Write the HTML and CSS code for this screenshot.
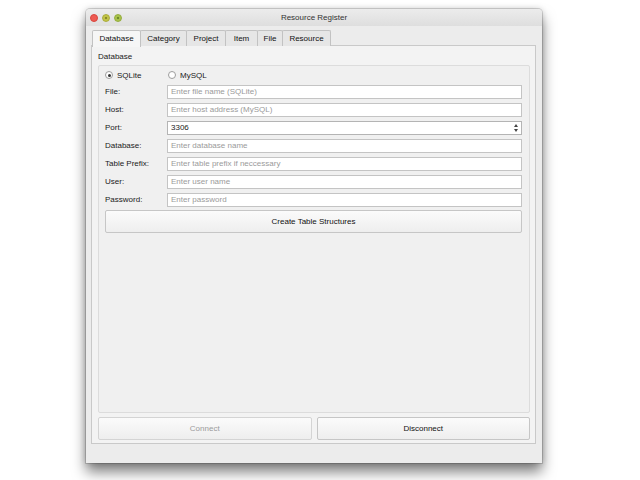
FILE: index.html
```html
<!DOCTYPE html>
<html>
<head>
<meta charset="utf-8">
<title>Resource Register</title>
<link rel="stylesheet" href="styles.css">
</head>
<body>
<div class="window">
  <div class="titlebar">
    <div class="lights">
      <span class="light red"></span>
      <span class="light yellow"></span>
      <span class="light green"></span>
    </div>
    <div class="title">Resource Register</div>
    <div></div>
  </div>
  <div class="content">
    <div class="tabs">
      <div class="tab active t-db">Database</div>
      <div class="tab t-cat">Category</div>
      <div class="tab t-proj">Project</div>
      <div class="tab t-item">Item</div>
      <div class="tab t-file">File</div>
      <div class="tab t-res">Resource</div>
    </div>
    <div class="pane">
      <div class="group-title">Database</div>
      <div class="group">
        <div class="radios">
          <label class="radio first"><span class="dot checked"></span>SQLite</label>
          <label class="radio"><span class="dot"></span>MySQL</label>
        </div>
        <div class="form">
          <div class="lbl">File:</div><div class="input ph">Enter file name (SQLite)</div>
          <div class="lbl">Host:</div><div class="input ph">Enter host address (MySQL)</div>
          <div class="lbl">Port:</div><div class="input spin"><span class="val">3306</span><span class="arrows"><span class="up"></span><span class="down"></span></span></div>
          <div class="lbl">Database:</div><div class="input ph">Enter database name</div>
          <div class="lbl">Table Prefix:</div><div class="input ph">Enter table prefix if neccessary</div>
          <div class="lbl">User:</div><div class="input ph">Enter user name</div>
          <div class="lbl">Password:</div><div class="input ph">Enter password</div>
        </div>
        <div class="button create">Create Table Structures</div>
      </div>
      <div class="actions">
        <div class="button disabled">Connect</div>
        <div class="button">Disconnect</div>
      </div>
    </div>
  </div>
</div>
</body>
</html>
```
FILE: styles.css
```css
html, body {
  margin: 0;
  background: #ffffff;
}
body {
  box-sizing: border-box;
  min-height: 480px;
  padding: 9px 0 0 86px;
  font-family: "Liberation Sans", Arial, sans-serif;
  font-size: 8px;
  color: #1a1a1a;
}
.window {
  width: 456px;
  height: 454px;
  box-sizing: border-box;
  background: #ececec;
  border-radius: 4px 4px 0 0;
  box-shadow: 0 9px 14px rgba(0, 0, 0, 0.5), 0 0 6px rgba(0, 0, 0, 0.18), 0 0 0 1px rgba(0, 0, 0, 0.14);
  display: flex;
  flex-direction: column;
}
.titlebar {
  height: 17px;
  display: grid;
  grid-template-columns: 1fr auto 1fr;
  align-items: center;
  background: linear-gradient(#ececec, #dedede);
  border-radius: 4px 4px 0 0;
}
.lights {
  display: flex;
  gap: 4px;
  padding-left: 4px;
}
.light {
  width: 8px;
  height: 8px;
  border-radius: 50%;
  box-sizing: border-box;
}
.red { background: #ee5a52; border: 1px solid #d8473f; }
.yellow { background: radial-gradient(circle, #8a8a2a 0 1.2px, #c3c547 1.6px); border: 1px solid #a9ab38; }
.green { background: radial-gradient(circle, #6e8a2a 0 1.2px, #a9c34c 1.6px); border: 1px solid #93ab3a; }
.title {
  color: #333;
}
.content {
  flex: 1;
  display: flex;
  flex-direction: column;
  padding: 4px 6px 19px 5px;
}
.tabs {
  display: flex;
  height: 16px;
  margin-left: 1px;
  margin-bottom: -1px;
  position: relative;
  z-index: 1;
}
.tab {
  box-sizing: border-box;
  height: 16px;
  line-height: 15px;
  text-align: center;
  background: #e6e6e6;
  border: 1px solid #c2c2c2;
  border-bottom: none;
  margin-right: -1px;
  border-radius: 2px 2px 0 0;
  color: #111;
}
.t-db { width: 49px; }
.t-cat { width: 47px; }
.t-proj { width: 40px; }
.t-item { width: 33px; }
.t-file { width: 26px; }
.t-res { width: 49px; }
.tab.active {
  background: #f6f6f6;
  height: 17px;
}
.pane {
  flex: 1;
  box-sizing: border-box;
  border: 1px solid #c9c9c9;
  background: #f3f3f3;
  padding: 5px 5px 3px 6px;
  display: flex;
  flex-direction: column;
}
.group-title {
  height: 11px;
  line-height: 11px;
  margin-bottom: 3px;
}
.group {
  flex: 1;
  border: 1px solid #dcdcdc;
  border-radius: 2px;
  background: #f0f0f0;
  padding: 2px 7px 0 6px;
}
.radios {
  height: 14px;
  display: flex;
  align-items: center;
}
.radio {
  display: flex;
  align-items: center;
  gap: 4px;
}
.radio.first { width: 63px; }
.dot {
  width: 8px;
  height: 8px;
  box-sizing: border-box;
  border-radius: 50%;
  border: 1px solid #9d9d9d;
  background: #fff;
  display: flex;
  align-items: center;
  justify-content: center;
}
.dot.checked::after {
  content: "";
  width: 3px;
  height: 3px;
  border-radius: 50%;
  background: #333;
}
.form {
  margin-top: 3px;
  display: grid;
  grid-template-columns: 62px 1fr;
  grid-auto-rows: 14px;
  row-gap: 4px;
}
.lbl {
  line-height: 14px;
}
.input {
  box-sizing: border-box;
  background: #fff;
  border: 1px solid #c4c4c4;
  line-height: 12px;
  padding-left: 3px;
  color: #1a1a1a;
}
.input.ph { color: #9a9a9a; }
.spin {
  display: flex;
  justify-content: space-between;
  align-items: center;
  border-color: #b4b4b4;
}
.arrows {
  width: 8px;
  height: 12px;
  display: flex;
  flex-direction: column;
  align-items: center;
  justify-content: center;
  gap: 2px;
  margin-right: 1px;
}
.up, .down {
  width: 0;
  height: 0;
  border-left: 2.5px solid transparent;
  border-right: 2.5px solid transparent;
}
.up { border-bottom: 3px solid #444; }
.down { border-top: 3px solid #444; }
.button {
  box-sizing: border-box;
  height: 23px;
  border: 1px solid #c6c6c6;
  border-radius: 2px;
  background: linear-gradient(#fbfbfb, #eeeeee);
  display: flex;
  align-items: center;
  justify-content: center;
  color: #111;
}
.create { margin-top: 3px; }
.actions {
  display: flex;
  gap: 5px;
  margin-top: 4px;
}
.actions .button { flex: 1; }
.button.disabled {
  color: #9b9b9b;
  border-color: #d4d4d4;
}
```
